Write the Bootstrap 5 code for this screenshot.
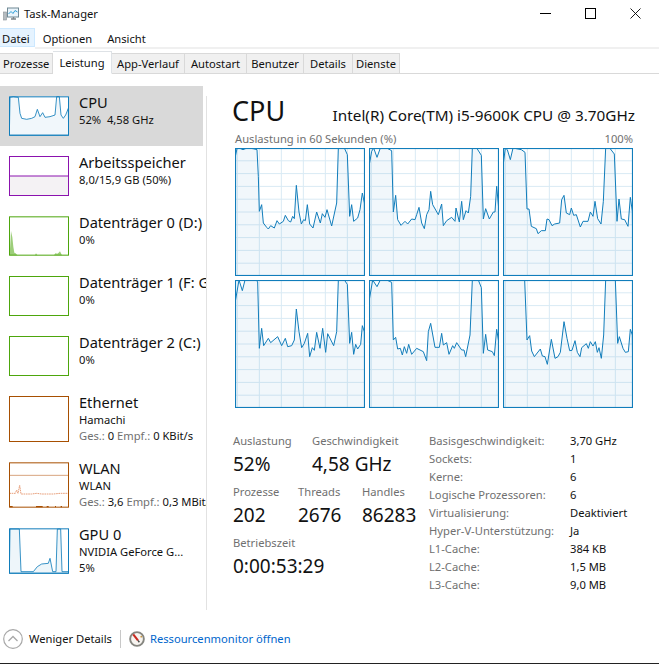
<!DOCTYPE html>
<html lang="de">
<head>
<meta charset="utf-8">
<title>Task-Manager</title>
<link href="https://cdn.jsdelivr.net/npm/bootstrap@5.3.0/dist/css/bootstrap.min.css" rel="stylesheet">
<style>
html,body{height:664px;overflow:hidden;}
body{width:659px;font-family:"Noto Sans","Open Sans",sans-serif;font-size:11.2px;line-height:16px;color:#111;background:#fff;}
.win-frame{height:664px;border-bottom:1px solid #222;}
.title-bar{height:28px;}
.app-ico{margin-left:3px;margin-right:5px;}
.win-btn{width:45px;height:26px;}
.win-ctrls{margin-right:1px;align-self:flex-start;}
.menu-bar{height:19px;}
.menu-entry{padding:0 6px 0 3px;height:19px;line-height:20px;margin-right:4px;border:1px solid transparent;}
.menu-entry.active-menu{background:#e5f3ff;border-color:#cce8ff;border-left:0;padding:0 4px 0 2px;}
.menu-strip{height:2px;background:#f0f0f0;margin-left:35px;}
.tab-strip{height:25px;border-bottom:1px solid #d9d9d9;align-items:flex-end;}
.tab-strip .nav-item{margin-bottom:-1px;}
.tab-strip .nav-link{height:21px;line-height:19px;padding:0 3px;border:1px solid #d9d9d9;border-left:0;border-radius:0;background:#f0f0f0;color:#111;margin:0;font-size:11.2px;text-align:center;}
.tab-strip .nav-link.active{height:23px;background:#fff;border-bottom:1px solid #fff;line-height:21px;font-size:11.2px;color:#111;}
.side-pane{width:206px;padding-top:12px;overflow:hidden;flex:none;}
.perf-item{height:60px;width:203px;padding-top:10px;padding-left:9px;gap:10px;white-space:nowrap;}
.perf-item.tall{height:66px;}
.perf-item.selected{background:#d9d9d9;}
.perf-text{margin-top:-3px;}
.perf-name{font-size:14.6px;line-height:19px;}
.perf-sub{line-height:15.5px;}
.mute{color:#707070;}
.thumb{flex:none;display:block;}
.detail-pane{flex:none;width:452px;height:514px;margin-top:22px;border-left:1px solid #e2e2e2;padding-left:25px;}
.cpu-head{height:35px;width:403px;}
.cpu-title{font-size:27px;line-height:30px;font-weight:400;margin:0;}
.cpu-model{font-size:15.3px;line-height:20px;padding-top:9px;}
.cap-row{height:17px;width:398px;margin-left:3px;color:#707070;}
.core-grid{display:grid;grid-template-columns:repeat(3,130px);grid-auto-rows:128px;gap:4px;margin-left:3px;}
.core-grid svg{display:block;}
.stats-zone{margin-top:24px;margin-left:1px;}
.stats-left{width:196px;flex:none;}
.lab{color:#707070;line-height:18px;height:18px;}
.val{font-size:19px;line-height:28px;height:28px;}
.group-gap{margin-top:5px;}
.w79{width:79px;}
.w65{width:65px;}
.w64{width:64px;}
.spec-table{display:grid;grid-template-columns:141px auto;grid-auto-rows:18px;line-height:18px;}
.spec-table dt{font-weight:400;color:#707070;margin:0;}
.spec-table dd{margin:0;}
.foot-bar{height:53px;padding-top:4px;}
.foot-sep{width:1px;height:18px;background:#c8c8c8;margin:0 8px;}
.foot-link{color:#06c;text-decoration:none;}
.more-ico{margin-left:3px;margin-right:6px;}
.res-ico{margin-right:5px;}
</style>
</head>
<body>
<div class="win-frame d-flex flex-column">
  <svg width="0" height="0" class="position-absolute">
    <defs>
      <g id="grid"><path d="M7 0V384M73 0V384M139 0V384M205 0V384M271 0V384M337 0V384M0 38.4H390M0 76.8H390M0 115.2H390M0 153.6H390M0 192H390M0 230.4H390M0 268.8H390M0 307.2H390M0 345.6H390" fill="none" stroke="#d9eaf4" stroke-width="3"/></g>
    </defs>
  </svg>

  <header class="title-bar d-flex align-items-center">
    <svg class="app-ico" width="16" height="15" viewBox="0 0 16 15"><rect x=".5" y="5" width="3" height="8" fill="#b5bcc0" stroke="#8b9296" stroke-width=".6"/><rect x="4.5" y="1" width="11" height="9" fill="#eaf4fb" stroke="#6f8894"/><path d="M5.5 7L8 4.5L10 6.5L12 3.5L14.500 5" fill="none" stroke="#2f9fd8"/><path d="M8 12H13M10.500 10V12" stroke="#7d8589" stroke-width="1.400"/></svg>
    <span>Task-Manager</span>
    <div class="ms-auto d-flex win-ctrls">
      <div class="win-btn d-flex align-items-center justify-content-center"><svg width="11" height="11" viewBox="0 0 11 11"><path d="M0 5.500H11" stroke="#000"/></svg></div>
      <div class="win-btn d-flex align-items-center justify-content-center"><svg width="11" height="11" viewBox="0 0 11 11"><rect x=".5" y=".5" width="10" height="10" fill="none" stroke="#000"/></svg></div>
      <div class="win-btn d-flex align-items-center justify-content-center"><svg width="11" height="11" viewBox="0 0 11 11"><path d="M.5 .5L10.500 10.500M10.500 .5L.5 10.500" stroke="#000" stroke-width=".9"/></svg></div>
    </div>
  </header>

  <nav class="menu-bar d-flex">
    <span class="menu-entry active-menu">Datei</span>
    <span class="menu-entry">Optionen</span>
    <span class="menu-entry">Ansicht</span>
  </nav>
  <div class="menu-strip"></div>

  <ul class="nav nav-tabs tab-strip">
    <li class="nav-item"><a class="nav-link" style="width:53px">Prozesse</a></li>
    <li class="nav-item"><a class="nav-link active" style="width:59px">Leistung</a></li>
    <li class="nav-item"><a class="nav-link" style="width:73px">App-Verlauf</a></li>
    <li class="nav-item"><a class="nav-link" style="width:62px">Autostart</a></li>
    <li class="nav-item"><a class="nav-link" style="width:57px">Benutzer</a></li>
    <li class="nav-item"><a class="nav-link" style="width:49px">Details</a></li>
    <li class="nav-item"><a class="nav-link" style="width:47px">Dienste</a></li>
  </ul>

  <main class="d-flex flex-grow-1">
    <aside class="side-pane">
      <div class="perf-item selected d-flex">
        <svg class="thumb" width="60" height="40" viewBox="27 289 180 118"><rect x="27" y="289" width="180" height="118" fill="#fff"/><polygon points="28,406 30,292 40,290 55,292 60,340 65,355 80,358 95,355 105,350 112,328 120,350 128,338 135,352 150,350 165,345 170,290 178,290 183,345 190,355 197,345 205,325 206,406" fill="#117dbb" fill-opacity=".06" stroke="#117dbb" stroke-width="2.500"/><rect x="28.500" y="290.500" width="177" height="115" fill="none" stroke="#117dbb" stroke-width="3"/></svg>
        <div class="perf-text"><div class="perf-name">CPU</div><div class="perf-sub">52%&nbsp; 4,58 GHz</div></div>
      </div>
      <div class="perf-item d-flex">
        <svg class="thumb" width="60" height="40" viewBox="0 0 60 40"><rect x="0" y="20" width="60" height="20" fill="#f4f2f4"/><path d="M0 20H60" stroke="#8b12ae"/><rect x=".5" y=".5" width="59" height="39" fill="none" stroke="#8b12ae"/></svg>
        <div class="perf-text"><div class="perf-name">Arbeitsspeicher</div><div class="perf-sub">8,0/15,9 GB (50%)</div></div>
      </div>
      <div class="perf-item d-flex">
        <svg class="thumb" width="60" height="40" viewBox="27 199 180 118"><polygon points="29,316 33,243 37,262 40,290 43,308 47,310 52,316 105,316 108,310 112,316 162,316 166,310 172,311 176,308 180,304 184,312 186,316" fill="#4da60c" fill-opacity=".55"/><rect x="28.500" y="200.500" width="177" height="115" fill="none" stroke="#4da60c" stroke-width="3"/></svg>
        <div class="perf-text"><div class="perf-name">Datenträger 0 (D:)</div><div class="perf-sub">0%</div></div>
      </div>
      <div class="perf-item d-flex">
        <svg class="thumb" width="60" height="40" viewBox="0 0 60 40"><rect x=".5" y=".5" width="59" height="39" fill="none" stroke="#4da60c"/></svg>
        <div class="perf-text"><div class="perf-name">Datenträger 1 (F: G:)</div><div class="perf-sub">0%</div></div>
      </div>
      <div class="perf-item d-flex">
        <svg class="thumb" width="60" height="40" viewBox="0 0 60 40"><path d="M38 39.500H39" stroke="#2d7a02"/><rect x=".5" y=".5" width="59" height="39" fill="none" stroke="#4da60c"/></svg>
        <div class="perf-text"><div class="perf-name">Datenträger 2 (C:)</div><div class="perf-sub">0%</div></div>
      </div>
      <div class="perf-item tall d-flex">
        <svg class="thumb" width="60" height="46" viewBox="0 0 60 46"><rect x=".5" y=".5" width="59" height="45" fill="none" stroke="#a74f01"/></svg>
        <div class="perf-text"><div class="perf-name">Ethernet</div><div class="perf-sub">Hamachi</div><div class="perf-sub"><span class="mute">Ges.:</span> 0 <span class="mute">Empf.:</span> 0 KBit/s</div></div>
      </div>
      <div class="perf-item tall d-flex">
        <svg class="thumb" width="60" height="46" viewBox="27 247 180 136"><path d="M28 286H206" stroke="#d8a47f" stroke-width="3"/><path d="M28 340H46L50 330L54 340L59 316L63 342H95L110 340L125 342H160L180 340H206" fill="none" stroke="#e8a07c" stroke-width="3" stroke-dasharray="5 2"/><path d="M30 380H38M108 380H128M140 380H146M165 380H168M182 380H186" stroke="#a74f01" stroke-width="4"/><rect x="28.500" y="248.500" width="177" height="133" fill="none" stroke="#a74f01" stroke-width="3"/></svg>
        <div class="perf-text"><div class="perf-name">WLAN</div><div class="perf-sub">WLAN</div><div class="perf-sub"><span class="mute">Ges.:</span> 3,6 <span class="mute">Empf.:</span> 0,3 MBit/s</div></div>
      </div>
      <div class="perf-item tall d-flex">
        <svg class="thumb" width="60" height="46" viewBox="27 445 180 136"><polygon points="28,580 30,447 58,447 63,575 100,575 112,560 125,552 145,550 150,535 158,575 168,575 172,447 182,447 186,575 205,575 206,580" fill="#117dbb" fill-opacity=".07" stroke="#117dbb" stroke-width="2.500"/><rect x="28.500" y="446.500" width="177" height="133" fill="none" stroke="#117dbb" stroke-width="3"/></svg>
        <div class="perf-text"><div class="perf-name">GPU 0</div><div class="perf-sub">NVIDIA GeForce G...</div><div class="perf-sub">5%</div></div>
      </div>
    </aside>

    <section class="detail-pane">
      <div class="cpu-head d-flex justify-content-between">
        <h1 class="cpu-title">CPU</h1>
        <div class="cpu-model">Intel(R) Core(TM) i5-9600K CPU @ 3.70GHz</div>
      </div>
      <div class="cap-row d-flex justify-content-between"><span>Auslastung in 60 Sekunden (%)</span><span>100%</span></div>
      <div class="core-grid">
        <svg width="130" height="128" viewBox="0 0 390 384"><use href="#grid"/><g transform="translate(-30,-70)"><polygon points="30,454 30,100 36,72 42,70 54,75 66,70 84,72 96,75 100,155 103,260 110,240 115,295 125,308 130,313 137,303 148,310 156,288 163,298 175,290 181,272 190,288 197,292 203,275 208,282 214,182 222,262 229,298 236,285 241,288 247,240 254,298 264,310 275,262 286,295 292,267 300,278 306,255 320,304 335,235 340,70 358,70 367,90 374,275 380,240 386,290 398,280 405,255 412,205 418,235 420,454" fill="#117dbb" fill-opacity=".06" stroke="#117dbb" stroke-width="3"/></g><rect x="1.500" y="1.500" width="387" height="381" fill="none" stroke="#117dbb" stroke-width="3.500"/></svg>
        <svg width="130" height="128" viewBox="0 0 390 384"><use href="#grid"/><g transform="translate(-432,-70)"><polygon points="432,454 432,125 440,80 446,70 456,98 466,70 485,70 500,78 505,262 512,212 518,285 528,302 540,290 548,298 560,283 570,285 575,270 582,248 590,295 598,312 605,270 612,255 617,200 623,240 640,270 650,238 655,303 665,288 680,278 690,290 693,250 703,292 710,230 715,285 723,258 730,265 737,215 742,70 755,70 769,92 775,283 782,252 793,283 805,262 810,262 815,185 821,250 822,454" fill="#117dbb" fill-opacity=".06" stroke="#117dbb" stroke-width="3"/></g><rect x="1.500" y="1.500" width="387" height="381" fill="none" stroke="#117dbb" stroke-width="3.500"/></svg>
        <svg width="130" height="128" viewBox="0 0 390 384"><use href="#grid"/><g transform="translate(-190,-70)"><polygon points="190,454 190,125 197,70 203,75 212,105 220,70 245,75 256,83 262,253 268,253 275,305 290,312 295,327 305,318 317,318 322,283 328,285 337,303 345,298 360,295 366,225 373,212 380,265 390,270 395,250 402,272 410,270 422,307 430,290 445,290 452,262 460,275 466,230 474,282 484,298 491,230 498,70 510,70 524,88 532,290 538,223 545,283 555,285 565,305 572,218 578,260 580,454" fill="#117dbb" fill-opacity=".06" stroke="#117dbb" stroke-width="3"/></g><rect x="1.500" y="1.500" width="387" height="381" fill="none" stroke="#117dbb" stroke-width="3.500"/></svg>
        <svg width="130" height="128" viewBox="0 0 390 384"><use href="#grid"/><g transform="translate(-30,-15)"><polygon points="30,399 30,85 42,15 52,47 60,15 92,15 98,20 103,220 110,160 116,212 130,190 137,203 158,185 170,212 181,190 188,215 200,212 208,195 214,102 222,170 230,218 238,205 248,175 254,245 262,218 268,226 275,172 285,220 293,160 302,232 308,176 326,212 335,170 340,15 358,15 367,28 374,205 380,172 386,238 392,208 398,222 407,208 412,152 418,170 420,399" fill="#117dbb" fill-opacity=".06" stroke="#117dbb" stroke-width="3"/></g><rect x="1.500" y="1.500" width="387" height="381" fill="none" stroke="#117dbb" stroke-width="3.500"/></svg>
        <svg width="130" height="128" viewBox="0 0 390 384"><use href="#grid"/><g transform="translate(-432,-15)"><polygon points="432,399 432,80 443,15 456,35 466,15 485,15 500,22 505,195 512,187 518,222 526,220 532,240 538,215 545,235 551,208 560,238 575,220 595,230 605,257 610,170 617,145 630,217 643,217 650,175 655,210 665,203 672,238 683,212 688,220 695,203 710,225 717,225 722,245 735,180 742,15 760,15 769,38 775,235 782,178 788,225 802,230 808,242 815,163 821,200 822,399" fill="#117dbb" fill-opacity=".06" stroke="#117dbb" stroke-width="3"/></g><rect x="1.500" y="1.500" width="387" height="381" fill="none" stroke="#117dbb" stroke-width="3.500"/></svg>
        <svg width="130" height="128" viewBox="0 0 390 384"><use href="#grid"/><g transform="translate(-190,-15)"><polygon points="190,399 190,15 255,15 262,195 270,182 276,228 284,245 302,222 308,243 316,245 323,268 335,193 346,250 355,245 362,232 373,140 382,190 390,227 397,226 406,197 413,232 421,245 426,218 440,206 446,220 452,200 460,213 467,200 473,232 478,218 485,250 492,180 498,15 527,15 534,205 539,185 550,220 557,232 566,230 572,163 578,180 580,399" fill="#117dbb" fill-opacity=".06" stroke="#117dbb" stroke-width="3"/></g><rect x="1.500" y="1.500" width="387" height="381" fill="none" stroke="#117dbb" stroke-width="3.500"/></svg>
      </div>

      <div class="stats-zone d-flex">
        <div class="stats-left">
          <div class="d-flex">
            <div class="w79"><div class="lab">Auslastung</div><div class="val">52%</div></div>
            <div><div class="lab">Geschwindigkeit</div><div class="val">4,58 GHz</div></div>
          </div>
          <div class="d-flex group-gap">
            <div class="w65"><div class="lab">Prozesse</div><div class="val">202</div></div>
            <div class="w64"><div class="lab">Threads</div><div class="val">2676</div></div>
            <div><div class="lab">Handles</div><div class="val">86283</div></div>
          </div>
          <div class="group-gap"><div class="lab">Betriebszeit</div><div class="val">0:00:53:29</div></div>
        </div>
        <dl class="spec-table m-0">
          <dt>Basisgeschwindigkeit:</dt><dd>3,70 GHz</dd>
          <dt>Sockets:</dt><dd>1</dd>
          <dt>Kerne:</dt><dd>6</dd>
          <dt>Logische Prozessoren:</dt><dd>6</dd>
          <dt>Virtualisierung:</dt><dd>Deaktiviert</dd>
          <dt>Hyper-V-Unterstützung:</dt><dd>Ja</dd>
          <dt>L1-Cache:</dt><dd>384 KB</dd>
          <dt>L2-Cache:</dt><dd>1,5 MB</dd>
          <dt>L3-Cache:</dt><dd>9,0 MB</dd>
        </dl>
      </div>
    </section>
  </main>

  <footer class="foot-bar d-flex align-items-center">
    <svg class="more-ico" width="20" height="20" viewBox="0 0 20 20"><circle cx="10" cy="10" r="9.300" fill="#fff" stroke="#a8a8a8" stroke-width="1.200"/><path d="M5.500 12L10 7.500L14.500 12" fill="none" stroke="#a8a8a8" stroke-width="1.300"/></svg>
    <span>Weniger Details</span>
    <span class="foot-sep"></span>
    <svg class="res-ico" width="16" height="16" viewBox="0 0 17 17"><circle cx="8.500" cy="8.500" r="7.300" fill="#f7f4f0" stroke="#85857f" stroke-width="2"/><path d="M4.500 3.500L9.500 10" stroke="#c8281e" stroke-width="2.200"/><path d="M9.500 10L11 12" stroke="#444" stroke-width="1.500"/><circle cx="13" cy="6" r=".9" fill="#c9963a"/></svg>
    <a class="foot-link" href="#">Ressourcenmonitor öffnen</a>
  </footer>
</div>
<script src="https://cdn.jsdelivr.net/npm/bootstrap@5.3.0/dist/js/bootstrap.bundle.min.js"></script>
</body>
</html>
